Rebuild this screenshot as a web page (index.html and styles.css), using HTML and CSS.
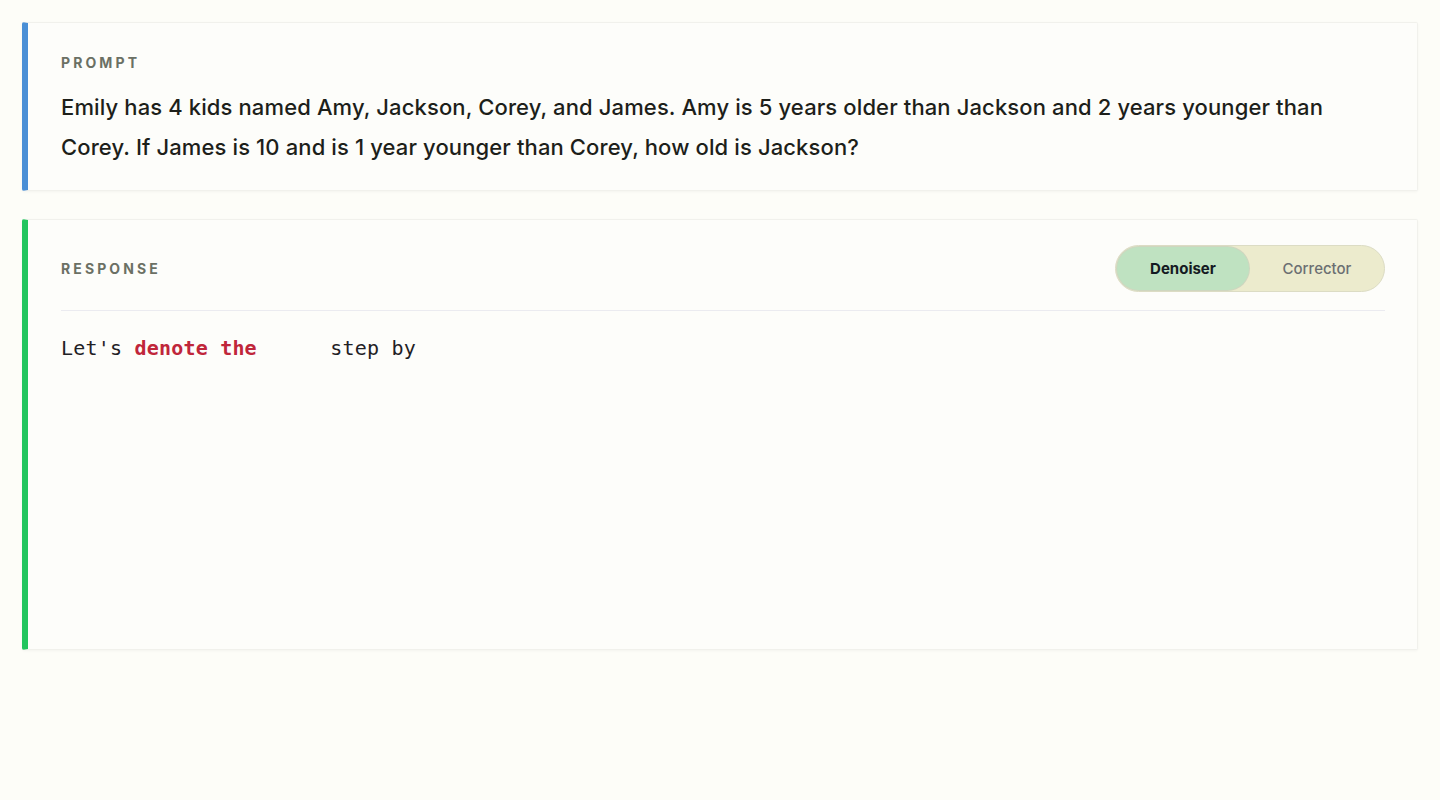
FILE: index.html
```html
<!DOCTYPE html>
<html lang="en">
<head>
<meta charset="utf-8">
<title>Prompt / Response</title>
<link rel="stylesheet" href="styles.css">
</head>
<body>
<main class="page">
  <section class="card card-prompt">
    <div class="label">PROMPT</div>
    <p class="prompt-text">Emily has 4 kids named Amy, Jackson, Corey, and James. Amy is 5 years older than Jackson and 2 years younger than Corey. If James is 10 and is 1 year younger than Corey, how old is Jackson?</p>
  </section>
  <section class="card card-response">
    <div class="response-head">
      <div class="label">RESPONSE</div>
      <div class="toggle">
        <button class="seg seg-active">Denoiser</button>
        <button class="seg">Corrector</button>
      </div>
    </div>
    <div class="response-body"><span class="tok">Let's </span><span class="tok tok-new">denote the</span><span class="tok">      step by</span></div>
  </section>
</main>
</body>
</html>
```
FILE: styles.css
```css
* { box-sizing: border-box; }
html, body { margin: 0; padding: 0; }
body {
  background: #fdfdf8;
  font-family: Inter, "Noto Sans", "Liberation Sans", sans-serif;
  color: #1c1e21;
}
.page {
  padding: 22px 22px;
  display: flex;
  flex-direction: column;
  gap: 28px;
}
.card {
  background: #fdfdfa;
  border: 1px solid #f1f1ec;
  border-left: 6px solid #4a8fd6;
  border-radius: 2px;
  box-shadow: 0 1px 3px rgba(0, 0, 0, 0.04);
}
.card-prompt {
  padding: 31px 32px 23px 33px;
}
.card-response {
  border-left-color: #22c55e;
  padding: 0 32px 0 33px;
  min-height: 431px;
}
.label {
  font-size: 14px;
  line-height: 17px;
  font-weight: 700;
  letter-spacing: 3.1px;
  color: #6b7064;
}
.prompt-text {
  margin: 17px 0 0;
  font-size: 22px;
  line-height: 39.5px;
  font-weight: 500;
  color: #1d1f1a;
  letter-spacing: 0.12px;
}
.response-head {
  display: flex;
  align-items: center;
  justify-content: space-between;
  padding: 25px 0 18px;
  border-bottom: 1px solid #ebebf0;
}
.toggle {
  display: flex;
  align-items: stretch;
  height: 47px;
  width: 270px;
  padding: 1px;
  border-radius: 24px;
  background: #ecebcd;
  border: 1px solid #dcdcc4;
}
.seg {
  flex: 0 0 auto;
  border: 0;
  background: transparent;
  font-family: Inter, "Noto Sans", "Liberation Sans", sans-serif;
  font-size: 15px;
  font-weight: 500;
  color: #6b6f72;
  border-radius: 22px;
  padding: 0;
  cursor: pointer;
}
.seg:last-child { flex: 1 1 auto; padding-left: 2px; }
.seg-active {
  width: 132px;
  background: #bfe2c1;
  color: #141a22;
  font-weight: 700;
  box-shadow: 0 0 0 1px #cfd6bf;
}
.response-body {
  padding-top: 25px;
  font-family: "DejaVu Sans Mono", "Liberation Mono", monospace;
  font-size: 20px;
  line-height: 24px;
  letter-spacing: 0.2px;
  white-space: pre;
  color: #1f2125;
}
.tok-new {
  color: #c0263a;
  font-weight: 700;
}
```
